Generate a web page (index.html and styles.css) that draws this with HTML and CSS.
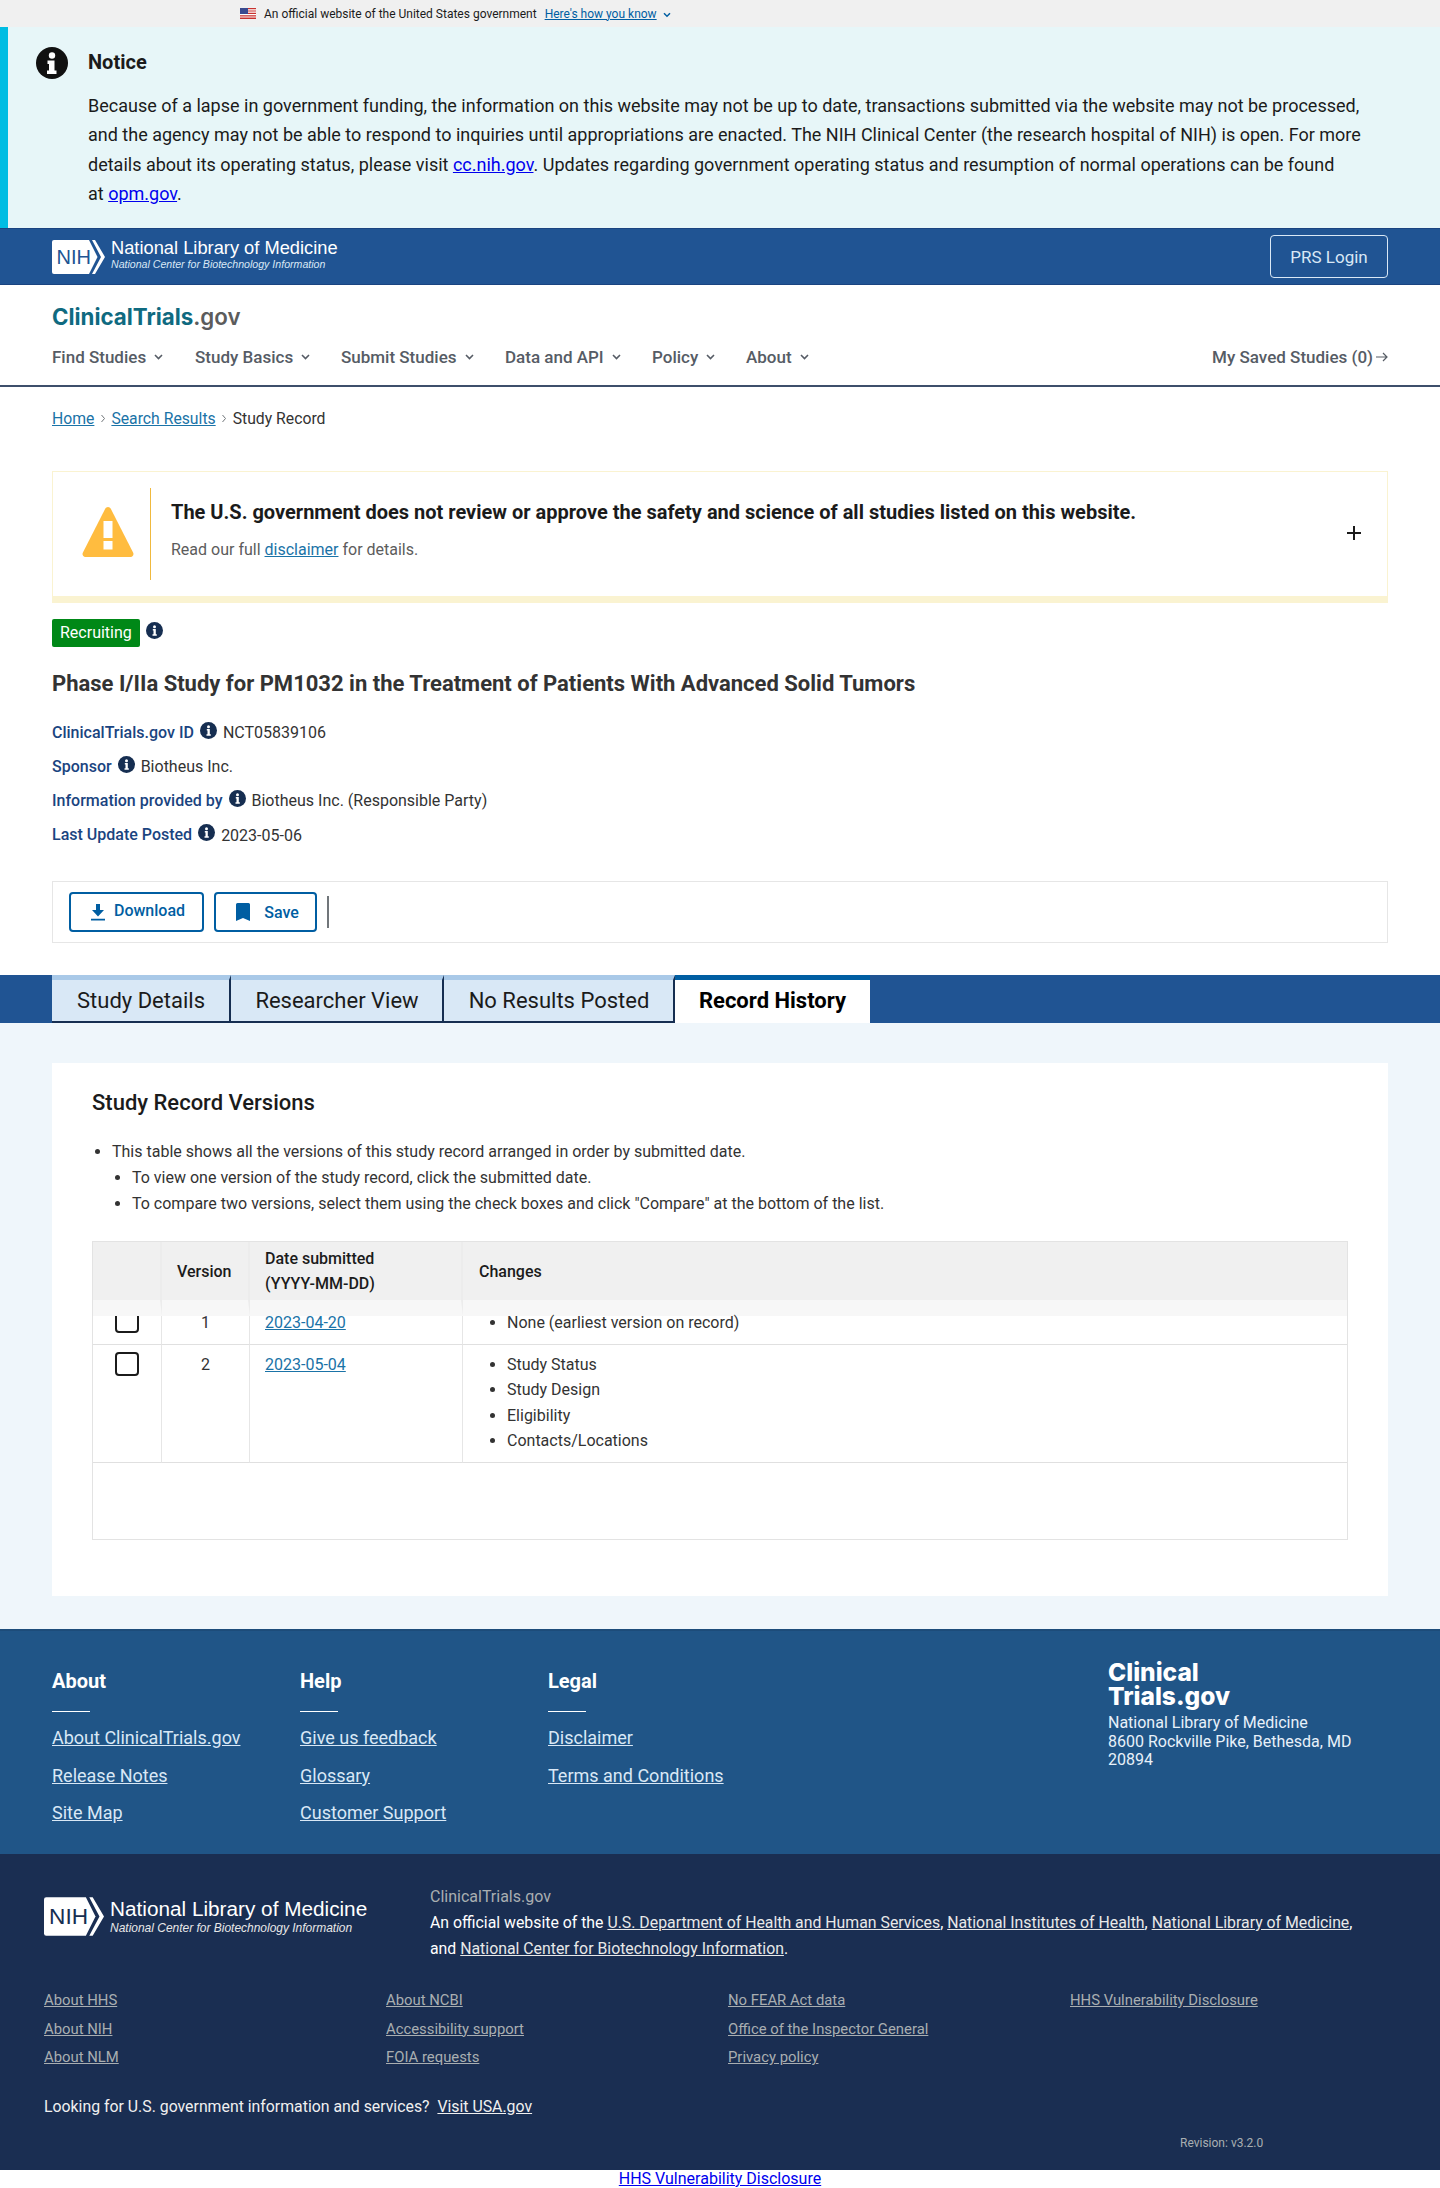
FILE: index.html
```html
<!DOCTYPE html>
<html lang="en">
<head>
<meta charset="utf-8">
<title>Phase I/IIa Study for PM1032 - ClinicalTrials.gov</title>
<link rel="stylesheet" href="styles.css">
</head>
<body>
<div class="gov-banner">
  <svg class="flag" width="16" height="11" viewBox="0 0 16 11"><rect width="16" height="11" fill="#fff"/><path d="M0 0h16v1.2H0zM0 2.4h16v1.2H0zM0 4.8h16V6H0zM0 7.2h16v1.2H0zM0 9.6h16V11H0z" fill="#c8322f"/><rect width="8" height="6" fill="#3a4a8f"/></svg>
  <span class="gov-text">An official website of the United States government</span>
  <a class="gov-link" href="#">Here's how you know</a>
  <svg class="chev gov-chev" width="8" height="6" viewBox="0 0 8 6"><path d="M1 1.2l3 3 3-3" fill="none" stroke="#005ea2" stroke-width="1.5"/></svg>
</div>

<section class="notice">
  <svg class="notice-icon" width="32" height="32" viewBox="0 0 32 32"><circle cx="16" cy="16" r="16" fill="#111"/><circle cx="16" cy="8.5" r="3.2" fill="#fff"/><path d="M11.5 13.5h7v10h2v3.5h-9.5v-3.5h2v-6.500h-1.500z" fill="#fff"/></svg>
  <div class="notice-body">
    <h2 class="notice-title">Notice</h2>
    <p class="notice-text">Because of a lapse in government funding, the information on this website may not be up to date, transactions submitted via the website may not be processed, and the agency may not be able to respond to inquiries until appropriations are enacted. The NIH Clinical Center (the research hospital of NIH) is open. For more details about its operating status, please visit <a href="#">cc.nih.gov</a>. Updates regarding government operating status and resumption of normal operations can be found at&nbsp;<a href="#">opm.gov</a>.</p>
  </div>
</section>

<header class="nlm-bar">
  <div class="nlm-logo">
    <svg class="nih-mark" width="53" height="34" viewBox="0 0 53 34"><path d="M2 0h35l8.500 17L37 34H2a2 2 0 0 1-2-2V2a2 2 0 0 1 2-2z" fill="#fff"/><path d="M40 0h3l10 17-10 17h-3l9-17z" fill="#fff"/><text x="4.500" y="24" class="nih-text" fill="#205493">NIH</text></svg>
    <div class="nlm-words">
      <div class="nlm-name">National Library of Medicine</div>
      <div class="nlm-sub">National Center for Biotechnology Information</div>
    </div>
  </div>
  <a class="prs-btn" href="#">PRS Login</a>
</header>

<div class="site-head">
  <div class="ct-logo"><span class="ct-a">ClinicalTrials</span><span class="ct-b">.gov</span></div>
  <nav class="main-nav">
    <ul class="nav-list">
      <li class="nav-item w143">Find Studies <svg class="chev" width="9" height="6" viewBox="0 0 9 6"><path d="M1 1l3.500 3.500L8 1" fill="none" stroke="#565c65" stroke-width="1.600"/></svg></li>
      <li class="nav-item w146">Study Basics <svg class="chev" width="9" height="6" viewBox="0 0 9 6"><path d="M1 1l3.500 3.500L8 1" fill="none" stroke="#565c65" stroke-width="1.600"/></svg></li>
      <li class="nav-item w164">Submit Studies <svg class="chev" width="9" height="6" viewBox="0 0 9 6"><path d="M1 1l3.500 3.500L8 1" fill="none" stroke="#565c65" stroke-width="1.600"/></svg></li>
      <li class="nav-item w147">Data and API <svg class="chev" width="9" height="6" viewBox="0 0 9 6"><path d="M1 1l3.500 3.500L8 1" fill="none" stroke="#565c65" stroke-width="1.600"/></svg></li>
      <li class="nav-item w94">Policy <svg class="chev" width="9" height="6" viewBox="0 0 9 6"><path d="M1 1l3.500 3.500L8 1" fill="none" stroke="#565c65" stroke-width="1.600"/></svg></li>
      <li class="nav-item">About <svg class="chev" width="9" height="6" viewBox="0 0 9 6"><path d="M1 1l3.500 3.500L8 1" fill="none" stroke="#565c65" stroke-width="1.600"/></svg></li>
    </ul>
    <a class="saved" href="#">My Saved Studies (0)<svg width="13" height="12" viewBox="0 0 13 12"><path d="M1 6h11M8 2l4 4-4 4" fill="none" stroke="#565c65" stroke-width="1.200"/></svg></a>
  </nav>
</div>

<main class="record">
  <div class="crumbs">
    <a class="crumb-first" href="#">Home</a>
    <svg width="6" height="9" viewBox="0 0 6 9"><path d="M1.500 1l3 3.500-3 3.500" fill="none" stroke="#71767a" stroke-width="1"/></svg>
    <a href="#">Search Results</a>
    <svg width="6" height="9" viewBox="0 0 6 9"><path d="M1.500 1l3 3.500-3 3.500" fill="none" stroke="#71767a" stroke-width="1"/></svg>
    <span>Study Record</span>
  </div>

  <section class="disclaimer">
    <div class="disc-icon">
      <svg width="52" height="52" viewBox="0 0 52 52"><path d="M26 2c1.200 0 2.200.7 2.800 1.800l22.400 44c.9 1.900-.4 4.200-2.500 4.200H3.300C1.200 52-.1 49.700.8 47.800l22.400-44C23.800 2.700 24.800 2 26 2z" fill="#ffbc3f"/><rect x="21.500" y="16" width="9" height="17" fill="#fff"/><rect x="21.500" y="36" width="9" height="8.500" fill="#fff"/></svg>
    </div>
    <div class="disc-text">
      <h2 class="disc-title">The U.S. government does not review or approve the safety and science of all studies listed on this website.</h2>
      <p class="disc-sub">Read our full <a href="#">disclaimer</a> for details.</p>
    </div>
    <svg class="disc-plus" width="14" height="14" viewBox="0 0 14 14"><path d="M7 0v14M0 7h14" stroke="#1b1b1b" stroke-width="2"/></svg>
  </section>

  <div class="status-row">
    <span class="badge">Recruiting</span>
    <svg class="info info-badge" width="17" height="17" viewBox="0 0 17 17"><circle cx="8.500" cy="8.500" r="8.500" fill="#162e51"/><circle cx="8.500" cy="4.700" r="1.500" fill="#fff"/><path d="M6.800 7h3v5.200h1v1.500H6.500v-1.500h1V8.500h-.7z" fill="#fff"/></svg>
  </div>

  <h1 class="study-title">Phase I/IIa Study for PM1032 in the Treatment of Patients With Advanced Solid Tumors</h1>

  <dl class="meta">
    <div class="meta-row"><dt>ClinicalTrials.gov ID</dt><svg class="info" width="17" height="17" viewBox="0 0 17 17"><circle cx="8.500" cy="8.500" r="8.500" fill="#162e51"/><circle cx="8.500" cy="4.700" r="1.500" fill="#fff"/><path d="M6.800 7h3v5.200h1v1.500H6.500v-1.500h1V8.500h-.7z" fill="#fff"/></svg><dd>NCT05839106</dd></div>
    <div class="meta-row"><dt>Sponsor</dt><svg class="info" width="17" height="17" viewBox="0 0 17 17"><circle cx="8.500" cy="8.500" r="8.500" fill="#162e51"/><circle cx="8.500" cy="4.700" r="1.500" fill="#fff"/><path d="M6.800 7h3v5.200h1v1.500H6.500v-1.500h1V8.500h-.7z" fill="#fff"/></svg><dd>Biotheus Inc.</dd></div>
    <div class="meta-row"><dt>Information provided by</dt><svg class="info" width="17" height="17" viewBox="0 0 17 17"><circle cx="8.500" cy="8.500" r="8.500" fill="#162e51"/><circle cx="8.500" cy="4.700" r="1.500" fill="#fff"/><path d="M6.800 7h3v5.200h1v1.500H6.500v-1.500h1V8.500h-.7z" fill="#fff"/></svg><dd>Biotheus Inc. (Responsible Party)</dd></div>
    <div class="meta-row"><dt>Last Update Posted</dt><svg class="info" width="17" height="17" viewBox="0 0 17 17"><circle cx="8.500" cy="8.500" r="8.500" fill="#162e51"/><circle cx="8.500" cy="4.700" r="1.500" fill="#fff"/><path d="M6.800 7h3v5.200h1v1.500H6.500v-1.500h1V8.500h-.7z" fill="#fff"/></svg><dd class="dd-low">2023-05-06</dd></div>
  </dl>

  <div class="actions">
    <button class="act-btn act-download"><svg width="14" height="17" viewBox="0 0 14 17"><path d="M5 0h4v6h4L7 12.500 1 6h4zM0 14.700h14V16.500H0z" fill="#005ea2"/></svg><span class="dl-label">Download</span></button>
    <button class="act-btn act-save"><svg width="14" height="18" viewBox="0 0 14 18"><path d="M1.500 0h11A1.500 1.500 0 0 1 14 1.500V18l-7-3-7 3V1.500A1.500 1.500 0 0 1 1.500 0z" fill="#005ea2"/></svg>Save</button>
    <span class="act-sep"></span>
  </div>
</main>

<div class="tabs">
  <a class="tab t1" href="#">Study Details</a>
  <a class="tab t2" href="#">Researcher View</a>
  <a class="tab t3" href="#">No Results Posted</a>
  <a class="tab t4 tab-active" href="#">Record History</a>
</div>

<section class="tab-panel">
  <div class="card">
    <h2 class="card-title">Study Record Versions</h2>
    <ul class="intro">
      <li>This table shows all the versions of this study record arranged in order by submitted date.
        <ul class="intro-sub">
          <li>To view one version of the study record, click the submitted date.</li>
          <li>To compare two versions, select them using the check boxes and click "Compare" at the bottom of the list.</li>
        </ul>
      </li>
    </ul>
    <div class="table-wrap">
      <table class="versions">
        <thead>
          <tr><th class="c1"></th><th class="c2">Version</th><th class="c3">Date submitted<br>(YYYY-MM-DD)</th><th class="c4">Changes</th></tr>
        </thead>
        <tbody>
          <tr class="row-clipped">
            <td class="c1"><div class="box-clip"><span class="box"></span></div></td>
            <td class="c2 num">1</td>
            <td class="c3"><a href="#">2023-04-20</a></td>
            <td class="c4"><ul class="changes"><li>None (earliest version on record)</li></ul></td>
          </tr>
          <tr class="row-full">
            <td class="c1"><span class="box"></span></td>
            <td class="c2 num">2</td>
            <td class="c3"><a href="#">2023-05-04</a></td>
            <td class="c4"><ul class="changes"><li>Study Status</li><li>Study Design</li><li>Eligibility</li><li>Contacts/Locations</li></ul></td>
          </tr>
        </tbody>
      </table>
    </div>
  </div>
</section>

<footer class="foot-ct">
  <div class="foot-col">
    <h3>About</h3>
    <a href="#">About ClinicalTrials.gov</a>
    <a href="#">Release Notes</a>
    <a href="#">Site Map</a>
  </div>
  <div class="foot-col">
    <h3>Help</h3>
    <a href="#">Give us feedback</a>
    <a href="#">Glossary</a>
    <a href="#">Customer Support</a>
  </div>
  <div class="foot-col">
    <h3>Legal</h3>
    <a href="#">Disclaimer</a>
    <a href="#">Terms and Conditions</a>
  </div>
  <div class="foot-addr">
    <div class="foot-logo">Clinical<br>Trials.gov</div>
    <address>National Library of Medicine<br>8600 Rockville Pike, Bethesda, MD 20894</address>
  </div>
</footer>

<footer class="foot-nlm">
  <div class="nlm-top">
    <div class="nlm-logo nlm-logo-lg">
      <svg class="nih-mark" width="60" height="39" viewBox="0 0 53 34"><path d="M2 0h35l8.500 17L37 34H2a2 2 0 0 1-2-2V2a2 2 0 0 1 2-2z" fill="#fff"/><path d="M40 0h3l10 17-10 17h-3l9-17z" fill="#fff"/><text x="4.500" y="24" class="nih-text" fill="#162e51">NIH</text></svg>
      <div class="nlm-words">
        <div class="nlm-name">National Library of Medicine</div>
        <div class="nlm-sub">National Center for Biotechnology Information</div>
      </div>
    </div>
    <div class="nlm-about">
      <div class="nlm-site">ClinicalTrials.gov</div>
      <p>An official website of the <a href="#">U.S. Department of Health and Human Services</a>, <a href="#">National Institutes of Health</a>, <a href="#">National Library of Medicine</a>, and <a href="#">National Center for Biotechnology Information</a>.</p>
    </div>
  </div>
  <div class="nlm-links">
    <a href="#">About HHS</a><a href="#">About NCBI</a><a href="#">No FEAR Act data</a><a href="#">HHS Vulnerability Disclosure</a>
    <a href="#">About NIH</a><a href="#">Accessibility support</a><a href="#">Office of the Inspector General</a><span></span>
    <a href="#">About NLM</a><a href="#">FOIA requests</a><a href="#">Privacy policy</a><span></span>
  </div>
  <p class="usa">Looking for U.S. government information and services?&nbsp; <a href="#">Visit USA.gov</a></p>
  <div class="revision">Revision: v3.2.0</div>
</footer>
<div class="vuln"><a href="#">HHS Vulnerability Disclosure</a></div>
</body>
</html>
```
FILE: styles.css
```css
* { box-sizing: border-box; }
html, body { margin: 0; padding: 0; }
body { font-family: Roboto, "Liberation Sans", sans-serif; font-size: 16px; color: #1b1b1b; background: #fff; }
h1, h2, h3, p, ul, dl, dd { margin: 0; padding: 0; }

.gov-banner { height: 27px; background: #f0f0f0; display: flex; align-items: center; padding-left: 240px; font-size: 12px; }
.flag { margin-right: 8px; }
.gov-text { color: #1b1b1b; margin-right: 8px; }
.gov-link { color: #005ea2; margin-right: 6px; }
.gov-chev { margin-top: 2px; }

.notice { height: 201px; background: #e7f6f8; border-left: 8px solid #00bde3; display: flex; gap: 20px; padding: 20px 0 0 28px; }
.notice-icon { flex: none; }
.notice-body { width: 1284px; }
.notice-title { font-size: 20px; font-weight: 700; line-height: 30px; color: #1b1b1b; }
.notice-text { margin-top: 14px; font-size: 18px; line-height: 29.3px; color: #1b1b1b; }
.notice-text a { color: #0000ee; }

.nlm-bar { height: 57px; background: #205493; border-top: 1px solid #1a4480; border-bottom: 1px solid #1a4480; display: flex; align-items: center; justify-content: space-between; padding: 0 52px; }
.nlm-logo { display: flex; align-items: center; gap: 6px; }
.nih-mark { display: block; flex: none; }
.nih-text { font-family: "Liberation Sans", sans-serif; font-size: 20px; }
.nlm-words { color: #fff; font-family: "Liberation Sans", Arial, sans-serif; margin-top: -5px; }
.nlm-name { font-size: 18.300px; line-height: 20px; }
.nlm-sub { font-size: 10.600px; line-height: 12px; font-style: italic; color: #d9e8f6; }
.prs-btn { width: 118px; height: 43px; border: 1px solid #d9e8f6; border-radius: 4px; color: #d9e8f6; display: flex; align-items: center; justify-content: center; text-decoration: none; font-size: 17px; }

.site-head { height: 102px; border-bottom: 2px solid #3d4f6b; padding: 18px 52px 0; }
.ct-logo { font-family: Inter, "Open Sans", sans-serif; font-size: 22.300px; line-height: 28px; font-weight: 700; }
.ct-a { color: #0f6a80; }
.ct-b { color: #5c5c5c; font-weight: 600; }
.main-nav { display: flex; justify-content: space-between; align-items: center; margin-top: 13px; height: 26px; color: #565c65; font-weight: 500; font-size: 17px; }
.nav-list { list-style: none; display: flex; }
.nav-item { display: flex; align-items: center; gap: 8px; }
.w143 { width: 143px; }
.w146 { width: 146px; }
.w164 { width: 164px; }
.w147 { width: 147px; }
.w94 { width: 94px; }
.saved { color: #565c65; text-decoration: none; display: flex; align-items: center; gap: 2px; }

.record { padding: 0 52px; }
.crumbs { display: flex; align-items: center; gap: 5px; height: 26px; margin-top: 18px; font-size: 15.750px; color: #333; }
.crumbs a, .disc-sub a, .versions a { color: #1a73a7; }
.crumb-first { margin-right: 1px; }
.crumbs span { margin-left: 1px; }

.disclaimer { margin-top: 40px; height: 132px; border: 1px solid #faf3d1; border-bottom-width: 7px; display: flex; align-items: flex-start; position: relative; padding-top: 16px; }
.disc-icon { width: 98px; height: 92px; border-right: 1px solid #f0b93e; padding: 17px 0 0 29px; flex: none; }
.disc-text { padding: 0 0 0 20px; }
.disc-title { font-size: 20px; font-weight: 700; line-height: 26px; margin-top: 11px; color: #1b1b1b; }
.disc-sub { margin-top: 13px; line-height: 24px; color: #5c5c5c; }
.disc-plus { position: absolute; right: 26px; top: 54px; }

.status-row { display: flex; margin-top: 16px; height: 28px; align-items: flex-start; gap: 6px; }
.badge { background: #008817; color: #fff; height: 28px; line-height: 27px; padding: 0 8px; border-radius: 2px; width: 88px; white-space: nowrap; }
.info { display: block; flex: none; }
.info-badge { margin-top: 3px; }

.study-title { margin-top: 22px; font-size: 22px; line-height: 30px; font-weight: 700; color: #333; }
.meta { margin-top: 16px; }
.meta-row { height: 34px; display: flex; align-items: center; gap: 6px; }
.meta-row dt { color: #1a4480; font-weight: 500; }
.meta-row .info { margin-top: -3px; }
.meta-row dd { color: #333; }
.dd-low { margin-top: 2px; }

.actions { margin-top: 30px; height: 62px; border: 1px solid #e6e6e6; display: flex; align-items: center; padding-left: 16px; gap: 10px; }
.act-btn { height: 40px; background: #fff; border: 2px solid #005ea2; border-radius: 4px; color: #005ea2; font: 500 16px Roboto, sans-serif; display: flex; align-items: center; justify-content: center; }
.act-download { width: 135px; gap: 9px; padding-left: 9px; }
.dl-label { margin-bottom: 4px; }
.act-save { width: 103px; gap: 14px; padding-left: 10px; }
.act-sep { width: 2px; height: 32px; background: #71767a; }

.tabs { margin-top: 32px; height: 48px; background: #205493; padding-left: 52px; display: flex; }
.tab { display: flex; align-items: center; justify-content: center; height: 48px; font-size: 22px; color: #1b1b1b; background: #d9e8f6; border-top: 5px solid #a9c9e8; border-bottom: 2px solid #162e51; border-right: 2px solid #162e51; text-decoration: none; padding-left: 1px; }
.t1 { width: 179px; }
.t2 { width: 213px; }
.t3 { width: 231px; }
.t4 { width: 195px; }
.tab-active { background: #fff; font-weight: 700; color: #000; border-top-color: #005ea2; border-bottom-color: #fff; border-right: 0; padding-left: 0; }

.tab-panel { background: #eff6fb; padding: 40px 52px 33px; height: 606px; }
.card { background: #fff; height: 533px; padding: 26px 40px 0; }
.card-title { font-size: 22px; font-weight: 500; line-height: 28px; color: #1b1b1b; }
.intro { margin-top: 22px; padding-left: 20px; color: #333; }
.intro li { line-height: 26px; }
.intro-sub { padding-left: 20px; list-style: disc; }
.table-wrap { margin-top: 24px; height: 299px; border: 1px solid #e3e3e3; }
.versions { width: 100%; border-collapse: separate; border-spacing: 0; table-layout: fixed; }
.versions thead th { height: 74px; background: #f0f0f0; text-align: left; font-weight: 500; font-size: 16px; line-height: 25px; padding: 0 0 0 15px; border-right: 2px solid #ececec; border-bottom: 16px solid #f7f7f7; color: #1b1b1b; }
.versions thead th:last-child { border-right: 0; padding-left: 16px; }
.c1 { width: 69px; }
.c2 { width: 88px; }
.c3 { width: 213px; }
.versions td { border-right: 1px solid #e6e6e6; border-bottom: 1px solid #e0e0e0; vertical-align: top; color: #333; padding: 0; }
.versions td:last-child { border-right: 0; }
.row-clipped td { height: 29px; }
.row-full td { height: 118px; }
.versions td.c3 { padding-left: 15px; }
.row-full td.c3, .row-full td.num { padding-top: 7px; line-height: 26px; }
.num { text-align: center; }
.row-clipped td.num, .row-clipped td.c3 { line-height: 14px; }
.box-clip { height: 17px; overflow: hidden; padding-left: 22px; }
.box-clip .box { margin: -7px 0 0 0; }
.box { display: block; width: 24px; height: 24px; border: 2px solid #1b1b1b; border-radius: 4px; background: #fff; }
.row-full td.c1 { padding: 7px 0 0 22px; }
.changes { padding-left: 44px; list-style: disc; }
.changes li { line-height: 25.300px; }
.row-clipped .changes li { line-height: 14px; }
.row-full .changes { padding-top: 7px; }

.foot-ct { height: 225px; background: #205587; border-top: 2px solid #1d4c7a; display: flex; padding: 36px 0 0 52px; color: #fff; }
.foot-col { width: 248px; display: flex; flex-direction: column; align-items: flex-start; }
.foot-col h3 { font-size: 20px; font-weight: 700; line-height: 28px; padding-bottom: 16px; margin: 0; width: 38px; white-space: nowrap; border-bottom: 1px solid #fff; }
.foot-col a { color: #d9e8f6; font-size: 18px; line-height: 24px; margin-bottom: 13.500px; }
.foot-col h3 + a { margin-top: 14px; }
.foot-addr { margin-left: 312px; width: 270px; margin-top: -7px; }
.foot-logo { font-family: Inter, sans-serif; font-weight: 800; font-size: 24.500px; line-height: 24px; color: #fff; }
.foot-addr address { font-style: normal; font-size: 16px; line-height: 18.500px; color: #e8f1fa; margin-top: 6px; }

.foot-nlm { height: 316px; background: #1a2e52; padding: 30px 44px 0; position: relative; color: #fff; }
.nlm-top { display: flex; }
.nlm-logo-lg { width: 386px; margin-top: 13px; align-items: flex-start; }
.nlm-logo-lg .nlm-words { margin-top: -1px; }
.nlm-logo-lg .nlm-name { font-size: 20.750px; line-height: 26px; }
.nlm-logo-lg .nlm-sub { font-size: 11.970px; line-height: 12px; color: #e8e8e8; }
.nlm-site { color: #a9aeb1; line-height: 26px; }
.nlm-about { width: 940px; }
.nlm-about p { line-height: 26px; font-size: 15.830px; }
.nlm-about a { color: #e8e8e8; }
.nlm-links { margin-top: 24px; display: grid; grid-template-columns: repeat(4, 342px); }
.nlm-links a { color: #a9aeb1; font-size: 14.850px; line-height: 28.500px; justify-self: start; }
.usa { margin-top: 22px; line-height: 26px; color: #f0f0f0; font-size: 15.830px; }
.usa a { color: #f0f0f0; }
.revision { position: absolute; left: 1180px; top: 282px; font-size: 12px; color: #a9aeb1; }
.vuln { text-align: center; height: 18px; line-height: 18px; }
.vuln a { color: #0000ee; }
```
